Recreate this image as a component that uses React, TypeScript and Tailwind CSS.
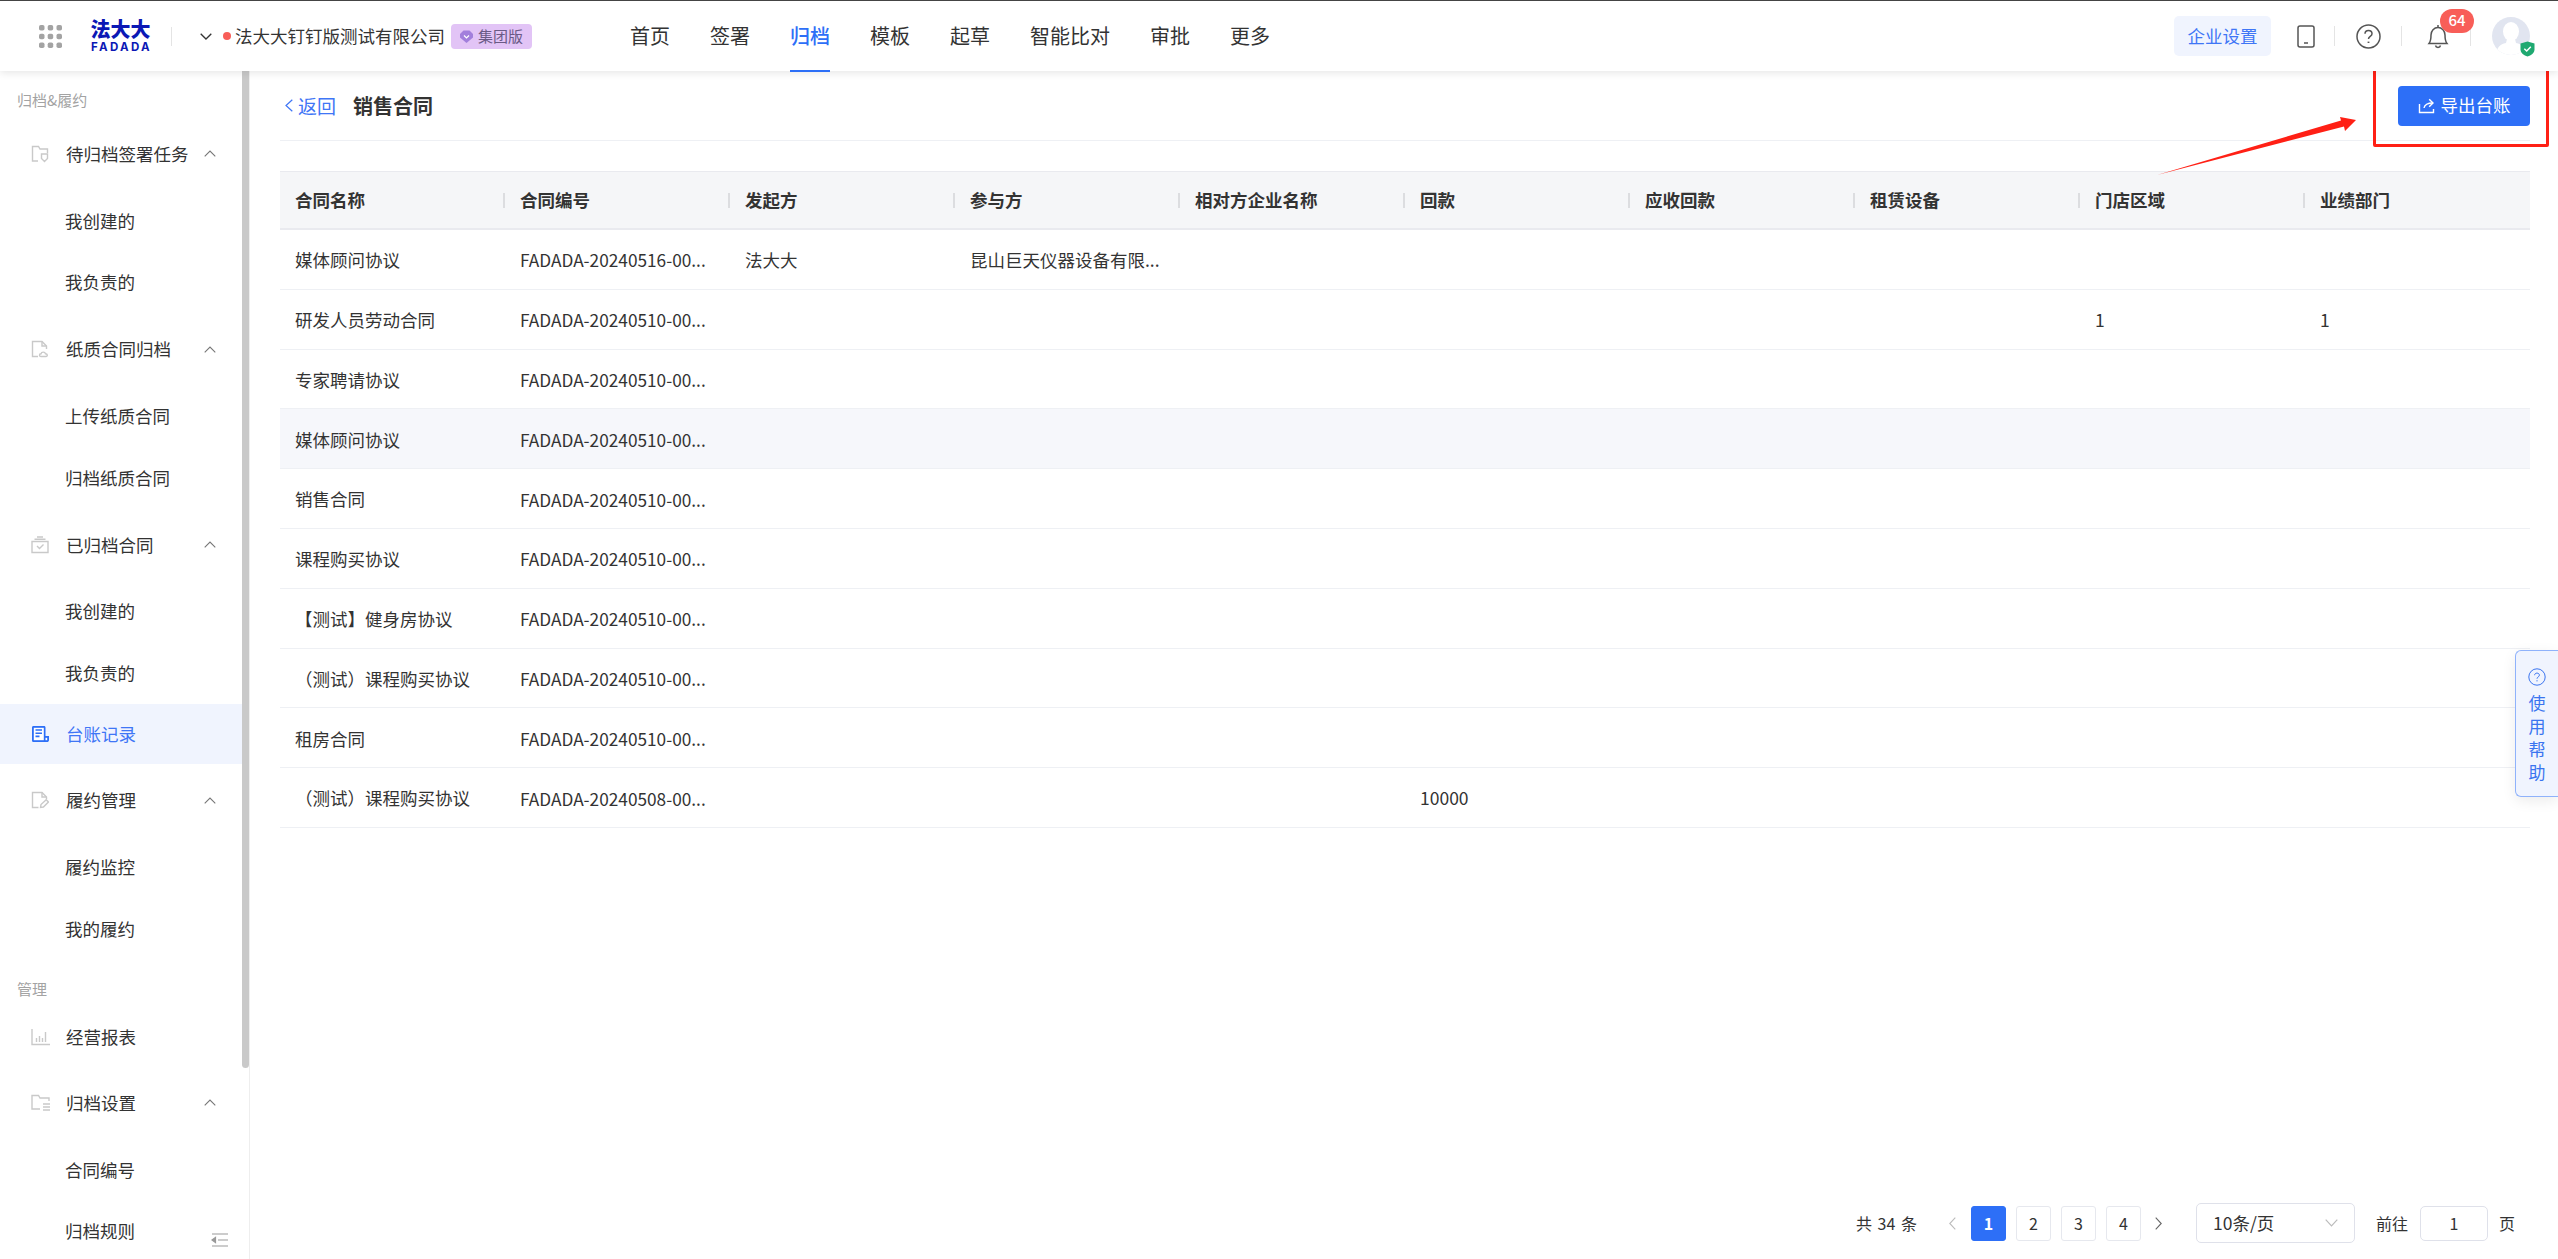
import { FC } from "react";

type SideRow =
  | { kind: "label"; text: string; cls: string }
  | { kind: "group"; text: string; icon: FC; first?: boolean; chevron?: boolean }
  | { kind: "sub"; text: string }
  | { kind: "leaf"; text: string; icon: FC; active?: boolean };

const grayIcon = "w-[18px] h-[18px] fill-none stroke-[#c9c9c9] stroke-[1.4]";

const FolderShield: FC = () => (
  <svg viewBox="0 0 18 18" className={grayIcon}>
    <path d="M7 16H1.5V1.5H7.5L9 4H16.5V8" />
    <path d="M10.5 9H16.5V13.5L13.5 16.5L10.5 13.5Z" />
  </svg>
);
const PaperCloud: FC = () => (
  <svg viewBox="0 0 18 18" className={grayIcon}>
    <path d="M7 16.5H1.5V1.5H11L15.5 6V9" />
    <path d="M11 1.5V6H15.5" />
    <path d="M10 16.5C8 16.5 8 13.8 10 13.8C10.5 11.5 14 11.5 14.5 13.8C16.8 13.8 16.8 16.5 15 16.5Z" />
  </svg>
);
const ArchiveBox: FC = () => (
  <svg viewBox="0 0 18 18" className={grayIcon}>
    <path d="M1 5.5H17V16.5H1Z" />
    <path d="M3.5 3.2H14.5M6 1H12" />
    <path d="M6 10L8.5 12.5L12.5 8.5" />
  </svg>
);
const LedgerIcon: FC = () => (
  <svg viewBox="0 0 18 18" className="w-[18px] h-[18px]">
    <path d="M2.5 1H13C14 1 14.5 1.6 14.5 2.5V11H18V15C18 16.4 17 17 16 17H2.5C1.4 17 1 16.4 1 15.5V2.5C1 1.6 1.5 1 2.5 1Z" fill="#2d6ff7" />
    <path d="M2.8 2.8H12.8V15.2H2.8Z" fill="#fff" />
    <path d="M4.5 5H11M4.5 8.2H11M4.5 11.4H8.5" stroke="#2d6ff7" strokeWidth="1.6" fill="none" />
    <path d="M14.5 12.8H16.2V15.2H14.5Z" fill="#fff" />
  </svg>
);
const PaperPen: FC = () => (
  <svg viewBox="0 0 18 18" className={grayIcon}>
    <path d="M7.5 16.5H1.5V1.5H11L15.5 6V8" />
    <path d="M11 1.5V6H15.5" />
    <path d="M9.5 16.5L10 13.5L15.2 8.8L17.4 11L12.4 16Z" />
  </svg>
);
const BarsIcon: FC = () => (
  <svg viewBox="0 0 19 18" className="w-[19px] h-[18px] fill-none stroke-[#c9c9c9] stroke-[1.4]">
    <path d="M1 1V16.5H19" />
    <path d="M5.5 10V14M8.5 8V14M11.5 10V14M14.5 4V14" />
  </svg>
);
const FolderList: FC = () => (
  <svg viewBox="0 0 19 18" className="w-[19px] h-[18px] fill-none stroke-[#c9c9c9] stroke-[1.4]">
    <path d="M9 15H1V1.5H7.5L9 4H18V7" />
    <path d="M12 10H19M12 13H19M12 16H19" />
  </svg>
);

const sideRows: SideRow[] = [
  { kind: "label", text: "归档&履约", cls: "h-[52px] pt-[19px] pl-[17px]" },
  { kind: "group", text: "待归档签署任务", icon: FolderShield, first: true },
  { kind: "sub", text: "我创建的" },
  { kind: "sub", text: "我负责的" },
  { kind: "group", text: "纸质合同归档", icon: PaperCloud },
  { kind: "sub", text: "上传纸质合同" },
  { kind: "sub", text: "归档纸质合同" },
  { kind: "group", text: "已归档合同", icon: ArchiveBox },
  { kind: "sub", text: "我创建的" },
  { kind: "sub", text: "我负责的" },
  { kind: "leaf", text: "台账记录", icon: LedgerIcon, active: true },
  { kind: "group", text: "履约管理", icon: PaperPen },
  { kind: "sub", text: "履约监控" },
  { kind: "sub", text: "我的履约" },
  { kind: "label", text: "管理", cls: "h-[47.5px] pt-[19px] pl-[17px]" },
  { kind: "leaf", text: "经营报表", icon: BarsIcon },
  { kind: "group", text: "归档设置", icon: FolderList },
  { kind: "sub", text: "合同编号" },
  { kind: "sub", text: "归档规则" },
];

const navItems = ["首页", "签署", "归档", "模板", "起草", "智能比对", "审批", "更多"];

const columns = ["合同名称", "合同编号", "发起方", "参与方", "相对方企业名称", "回款", "应收回款", "租赁设备", "门店区域", "业绩部门"];

// 空文字のセルは描画だけして中身なし
const rows: string[][] = [
  ["媒体顾问协议", "FADADA-20240516-00...", "法大大", "昆山巨天仪器设备有限...", "", "", "", "", "", ""],
  ["研发人员劳动合同", "FADADA-20240510-00...", "", "", "", "", "", "", "1", "1"],
  ["专家聘请协议", "FADADA-20240510-00...", "", "", "", "", "", "", "", ""],
  ["媒体顾问协议", "FADADA-20240510-00...", "", "", "", "", "", "", "", ""],
  ["销售合同", "FADADA-20240510-00...", "", "", "", "", "", "", "", ""],
  ["课程购买协议", "FADADA-20240510-00...", "", "", "", "", "", "", "", ""],
  ["【测试】健身房协议", "FADADA-20240510-00...", "", "", "", "", "", "", "", ""],
  ["（测试）课程购买协议", "FADADA-20240510-00...", "", "", "", "", "", "", "", ""],
  ["租房合同", "FADADA-20240510-00...", "", "", "", "", "", "", "", ""],
  ["（测试）课程购买协议", "FADADA-20240508-00...", "", "", "", "10000", "", "", "", ""],
];

const ChevronUp: FC = () => (
  <svg viewBox="0 0 12 7" className="w-[12px] h-[7px] fill-none stroke-[#777] stroke-[1.1]">
    <path d="M0.7 6.3L6 1L11.3 6.3" />
  </svg>
);

const Sidebar: FC = () => (
  <aside className="w-[250px] shrink-0 flex border-r border-[#eeeeee] overflow-hidden relative">
    <div className="w-[242px] shrink-0 text-[17.5px] text-[#333]">
      {sideRows.map((row, i) => {
        if (row.kind === "label") {
          return (
            <div key={i} className={`${row.cls} text-[15px] leading-[20px] text-[#a3a3a3]`}>
              {row.text}
            </div>
          );
        }
        if (row.kind === "group") {
          const Icon = row.icon;
          return (
            <div key={i} className={`h-[61.8px] flex items-center pl-[31px] ${row.first ? "mb-[5px]" : "my-[5px]"}`}>
              <span className="w-[35px] shrink-0 flex"><Icon /></span>
              <span className="w-[138px] shrink-0 whitespace-nowrap">{row.text}</span>
              <ChevronUp />
            </div>
          );
        }
        if (row.kind === "sub") {
          return (
            <div key={i} className="h-[61.8px] flex items-center pl-[65px]">
              {row.text}
            </div>
          );
        }
        const Icon = row.icon;
        return (
          <div key={i} className={`h-[60px] flex items-center pl-[31px] ${row.active ? "bg-[#f0f4fe] text-[#3f76f6]" : ""}`}>
            <span className="w-[35px] shrink-0 flex"><Icon /></span>
            {row.text}
          </div>
        );
      })}
    </div>
    <div className="w-[7px] shrink-0">
      <div className="h-[997px] bg-[#c9c9c9] rounded-b-[4px]" />
    </div>
    <svg viewBox="0 0 17 14" className="absolute left-[211px] bottom-[12px] w-[17px] h-[14px] fill-none stroke-[#999] stroke-[1.2]">
      <path d="M1 1H17M7 7H17M1 13H17" />
      <path d="M1 7L4.5 4.5V9.5Z" fill="#999" />
    </svg>
  </aside>
);

const Header: FC = () => (
  <header className="h-[71px] shrink-0 border-t border-[#444] bg-white flex items-center relative z-10 shadow-[0_2px_8px_rgba(0,0,0,0.1)] text-[#333]">
    <svg viewBox="0 0 23 23" className="w-[23px] h-[23px] ml-[39px] fill-[#a3a3a3]">
      <rect x="0" y="0" width="5.5" height="5.5" rx="1.8" />
      <rect x="8.7" y="0" width="5.5" height="5.5" rx="1.8" />
      <rect x="17.5" y="0" width="5.5" height="5.5" rx="1.8" />
      <rect x="0" y="8.7" width="5.5" height="5.5" rx="1.8" />
      <rect x="8.7" y="8.7" width="5.5" height="5.5" rx="1.8" />
      <rect x="17.5" y="8.7" width="5.5" height="5.5" rx="1.8" />
      <rect x="0" y="17.5" width="5.5" height="5.5" rx="1.8" />
      <rect x="8.7" y="17.5" width="5.5" height="5.5" rx="1.8" />
      <rect x="17.5" y="17.5" width="5.5" height="5.5" rx="1.8" />
    </svg>
    <div className="ml-[28px] w-[61px] flex flex-col items-center text-[#0b18b5]">
      <span className="text-[20px] leading-[20px] font-black whitespace-nowrap">法大大</span>
      <span className="text-[11.5px] leading-[12px] mt-[2px] font-bold tracking-[2.3px] mr-[-2px] whitespace-nowrap [font-family:Inter,sans-serif]">FADADA</span>
    </div>
    <span className="ml-[20px] w-px h-[19px] bg-[#e4e4e4]" />
    <svg viewBox="0 0 12 7" className="ml-[28px] w-[12px] h-[7px] fill-none stroke-[#333] stroke-[1.3]">
      <path d="M0.7 0.7L6 6L11.3 0.7" />
    </svg>
    <span className="ml-[11px] w-[8px] h-[8px] rounded-full bg-[#f85e58]" />
    <span className="ml-[4px] text-[17.5px] whitespace-nowrap">法大大钉钉版测试有限公司</span>
    <span className="ml-[6px] h-[25px] w-[81px] rounded-[4px] bg-[#e2c4f6] flex items-center pl-[8px] gap-[4px] text-[15px] text-[#6a5a86]">
      <svg viewBox="0 0 15 15" className="w-[15px] h-[15px]">
        <path d="M1 5L4.5 1.5H10.5L14 5V8.5L7.5 14L1 8.5Z" fill="#a27fdc" />
        <path d="M5 6.5L7.5 9L10 6.5" fill="none" stroke="#fff" strokeWidth="1.2" />
      </svg>
      集团版
    </span>
    <nav className="ml-[98px] flex gap-[40px] h-full text-[20px]">
      {navItems.map((item) => (
        <span
          key={item}
          className={`relative h-full flex items-center whitespace-nowrap ${item === "归档" ? "text-[#2d6ff7] font-medium" : ""}`}
        >
          {item}
          {item === "归档" && <span className="absolute left-0 right-0 -bottom-[1px] h-[2.5px] bg-[#2d6ff7]" />}
        </span>
      ))}
    </nav>
    <div className="ml-auto flex items-center pr-[28px]">
      <span className="w-[97px] h-[40px] rounded-[5px] bg-[#f0f4fe] text-[#3f76f6] text-[17.5px] flex items-center justify-center whitespace-nowrap">
        企业设置
      </span>
      <svg viewBox="0 0 18 23" className="ml-[26px] w-[18px] h-[23px] fill-none stroke-[#555] stroke-[1.5]">
        <rect x="1" y="1" width="16" height="21" rx="2" />
        <path d="M7 18H11" />
      </svg>
      <span className="ml-[19px] w-px h-[20px] bg-[#e4e4e4]" />
      <svg viewBox="0 0 25 25" className="ml-[21px] w-[25px] h-[25px] fill-none stroke-[#555] stroke-[1.5]">
        <circle cx="12.5" cy="12.5" r="11.5" />
        <path d="M9 9.8C9 5.4 16 5.4 16 9.8C16 12.4 12.5 12.4 12.5 15" />
        <path d="M12.5 17.6V19" strokeWidth="1.8" />
      </svg>
      <span className="ml-[20px] w-px h-[20px] bg-[#e4e4e4]" />
      <span className="ml-[25px] relative w-[22px] h-[25px] flex">
        <svg viewBox="0 0 22 25" className="w-[22px] h-[25px] fill-none stroke-[#555] stroke-[1.5]">
          <path d="M2 19.5C4 17 4 15 4 11C4 7 7 3.5 11 3.5C15 3.5 18 7 18 11C18 15 18 17 20 19.5Z" />
          <path d="M11 1V3.5" />
          <path d="M8.5 21.5C9 24 13 24 13.5 21.5" />
        </svg>
        <span className="absolute left-[13px] -top-[15px] w-[34px] h-[24px] rounded-full bg-[#f85e58] text-white text-[15px] font-medium flex items-center justify-center">
          64
        </span>
      </span>
      <span className="ml-[21px] w-px h-[20px] bg-[#e4e4e4]" />
      <span className="ml-[21px] relative w-[38px] h-[38px] flex">
        <svg viewBox="0 0 38 38" className="w-[38px] h-[38px]">
          <defs>
            <clipPath id="avatar-clip">
              <circle cx="19" cy="19" r="19" />
            </clipPath>
          </defs>
          <g clipPath="url(#avatar-clip)">
            <rect width="38" height="38" fill="#e1e5f0" />
            <ellipse cx="19" cy="14.5" rx="8" ry="9.5" fill="#fff" />
            <path d="M15 22H23L24 26C30 27 33 30 34 38H4C5 30 8 27 14 26Z" fill="#fff" />
          </g>
        </svg>
        <svg viewBox="0 0 15 16" className="absolute left-[28px] top-[24px] w-[15px] h-[16px]">
          <path d="M7.5 0.5L14.5 2.5V8.5C14.5 12 11 14.5 7.5 15.5C4 14.5 0.5 12 0.5 8.5V2.5Z" fill="#1fa971" />
          <path d="M4.3 7.8L6.7 10L10.8 5.8" fill="none" stroke="#fff" strokeWidth="1.5" />
        </svg>
      </span>
    </div>
  </header>
);

const Pagination: FC = () => (
  <div className="mt-auto flex items-center justify-end pb-[16px] pr-[15px] text-[16px] text-[#333]">
    <span className="whitespace-nowrap [word-spacing:2px]">共 34 条</span>
    <svg viewBox="0 0 7 13" className="ml-[32px] w-[7px] h-[13px] fill-none stroke-[#bbb] stroke-[1.1]">
      <path d="M6.3 0.7L0.8 6.5L6.3 12.3" />
    </svg>
    <span className="ml-[15px] flex gap-[10px]">
      {["1", "2", "3", "4"].map((p) => (
        <span
          key={p}
          className={`w-[35px] h-[35px] rounded-[3px] flex items-center justify-center border ${p === "1" ? "bg-[#2d6ff7] border-[#2d6ff7] text-white font-bold" : "border-[#e6e8ee]"}`}
        >
          {p}
        </span>
      ))}
    </span>
    <svg viewBox="0 0 7 13" className="ml-[14px] w-[7px] h-[13px] fill-none stroke-[#666] stroke-[1.1]">
      <path d="M0.7 0.7L6.2 6.5L0.7 12.3" />
    </svg>
    <span className="ml-[34px] w-[159px] h-[40px] rounded-[5px] border border-[#dfe1ea] flex items-center justify-between pl-[16px] pr-[16px] text-[17.5px]">
      10条/页
      <svg viewBox="0 0 13 8" className="w-[13px] h-[8px] fill-none stroke-[#bbb] stroke-[1.2]">
        <path d="M0.7 0.7L6.5 6.8L12.3 0.7" />
      </svg>
    </span>
    <span className="ml-[21px] whitespace-nowrap">前往</span>
    <span className="ml-[12px] w-[68px] h-[35px] rounded-[5px] border border-[#dfe1ea] flex items-center justify-center">1</span>
    <span className="ml-[11px]">页</span>
  </div>
);

const Content: FC = () => (
  <main className="flex-1 min-w-0 flex flex-col pl-[30px] pr-[28px]">
    <div className="h-[70px] shrink-0 flex items-center border-b border-[#eef0f4]">
      <svg viewBox="0 0 8 13" className="ml-[5px] w-[8px] h-[13px] fill-none stroke-[#3f76f6] stroke-[1.2]">
        <path d="M7.3 0.7L1 6.5L7.3 12.3" />
      </svg>
      <span className="ml-[5px] pt-[1px] text-[19px] text-[#3f76f6]">返回</span>
      <span className="ml-[17px] pt-[1px] text-[20px] font-bold text-[#333]">销售合同</span>
      <button className="ml-auto w-[132px] h-[40px] rounded-[4px] bg-[#2d6ff7] text-white text-[17.5px] flex items-center justify-center gap-[6px] whitespace-nowrap">
        <svg viewBox="0 0 17 16" className="w-[17px] h-[16px] fill-none stroke-white stroke-[1.4]">
          <path d="M1.5 6V14.5H15.5V11" />
          <path d="M6 10C6.5 7 9 5 15 5" />
          <path d="M11.2 1.2L15 5L11.2 8.8" />
        </svg>
        导出台账
      </button>
    </div>
    <div className="mt-[30px] text-[17.5px] text-[#333]">
      <div className="grid grid-cols-10 h-[59px] bg-[#f5f6f8] border-t border-b-2 border-[#e9eaef] font-bold">
        {columns.map((c, i) => (
          <div key={c} className="relative flex items-center pl-[15px] whitespace-nowrap">
            {c}
            {i < columns.length - 1 && <span className="absolute right-0 w-[2px] h-[15px] bg-[#dcdde0]" />}
          </div>
        ))}
      </div>
      {rows.map((r, i) => (
        <div key={i} className={`grid grid-cols-10 h-[59.8px] border-b border-[#eef0f4] ${i === 3 ? "bg-[#f6f7fb]" : ""}`}>
          {r.map((cell, j) => (
            <div key={j} className={`flex items-center pl-[15px] pt-[2px] whitespace-nowrap ${j === 1 ? "text-[17.25px]" : ""}`}>
              {cell}
            </div>
          ))}
        </div>
      ))}
    </div>
    <Pagination />
  </main>
);

export default function App() {
  return (
    <div className="relative w-[2558px] h-[1259px] overflow-hidden bg-white flex flex-col [font-family:'Noto_Sans_CJK_SC','Noto_Sans',sans-serif]">
      <Header />
      <div className="flex flex-1 min-h-0">
        <Sidebar />
        <Content />
      </div>

      {/* 使用帮助 */}
      <div className="absolute left-[2515px] top-[650px] w-[43px] h-[147px] rounded-l-[6px] border border-r-0 border-[#8fb2fb] bg-[#f0f4fe] text-[#3a74f0] text-[17px] leading-[23px] flex flex-col items-center pt-[17px] shadow-[0_4px_14px_rgba(0,0,0,0.08)]">
        <svg viewBox="0 0 18 18" className="w-[18px] h-[18px] mb-[5px] fill-none stroke-[#3a74f0] stroke-[1]">
          <circle cx="9" cy="9" r="8.2" />
          <path d="M6.6 7.2C6.6 4.4 11.4 4.4 11.4 7.2C11.4 8.9 9 8.9 9 10.7" />
          <path d="M9 12.2V13.4" />
        </svg>
        <span>使</span>
        <span>用</span>
        <span>帮</span>
        <span>助</span>
      </div>

      {/* 赤い注釈 */}
      <div className="absolute left-[2373px] top-[60px] w-[176px] h-[87px] border-[3px] border-[#ff2015] rounded-[2px]" />
      <svg viewBox="0 0 210 65" className="absolute left-[2150px] top-[110px] w-[210px] h-[65px]">
        <path d="M7 65L191 10.5L190 7L206 10L195 21L194 16.5Z" fill="#ff2015" />
      </svg>
    </div>
  );
}
